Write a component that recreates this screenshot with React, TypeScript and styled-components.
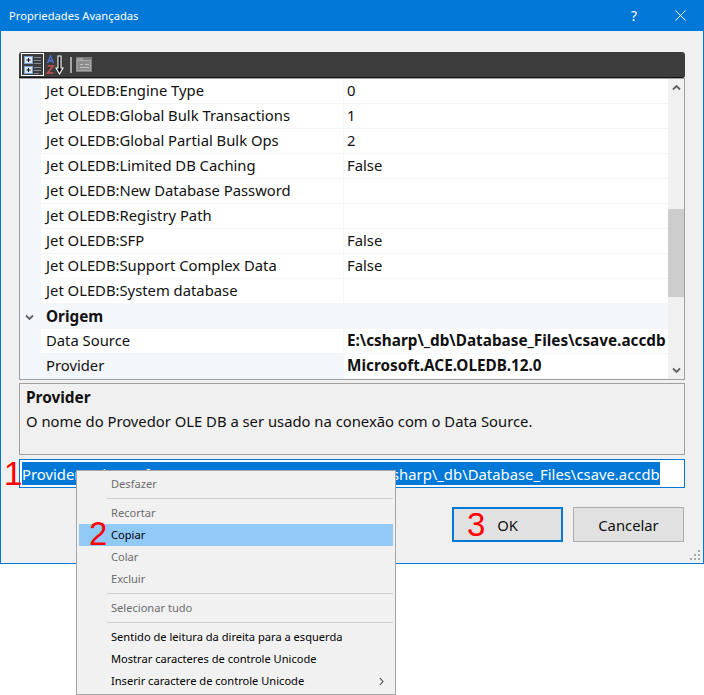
import React from "react";
import styled, { createGlobalStyle } from "styled-components";

const FONT = `"Noto Sans", "Open Sans", "Liberation Sans", sans-serif`;

const GlobalStyle = createGlobalStyle`
  html, body {
    margin: 0;
    padding: 0;
    background: #ffffff;
  }
  body {
    width: 704px;
    height: 695px;
    overflow: hidden;
    position: relative;
    font-family: ${FONT};
  }
`;

const Window = styled.div`
  width: 704px;
  height: 564px;
  box-sizing: border-box;
  border: 1px solid #0078d7;
  border-top: 0;
  background: #f0f0f0;
  display: flex;
  flex-direction: column;
  position: relative;
`;

const TitleBar = styled.div`
  height: 31px;
  flex: none;
  background: #0078d7;
  color: #ffffff;
  display: flex;
  align-items: center;
  padding-left: 8px;
  font-size: 11.2px;
`;

const TitleText = styled.span`
  flex: 1;
`;

const TitleButton = styled.div`
  width: 46px;
  height: 31px;
  display: flex;
  align-items: center;
  justify-content: center;
  font-size: 14px;
`;

const Content = styled.div`
  padding: 21px 18px 0 18px;
  display: flex;
  flex-direction: column;
`;

const Toolbar = styled.div`
  height: 25px;
  background: #3c3c3c;
  border-bottom: 1px solid #111111;
  border-radius: 3px 3px 3px 0;
  display: flex;
  align-items: center;
  padding-left: 2px;
`;

const ToolToggle = styled.div`
  width: 23px;
  height: 23px;
  box-sizing: border-box;
  border: 1px solid #ffffff;
  display: flex;
  align-items: center;
  justify-content: center;
  margin-right: 2px;
`;

const ToolDivider = styled.div`
  width: 2px;
  height: 16px;
  background: #a8a8a8;
  margin: 0 4px 0 4px;
`;

const Grid = styled.div`
  height: 302px;
  box-sizing: border-box;
  border: 1px solid #a0a0a0;
  display: flex;
  background: #f3f6fb;
`;

const GridRows = styled.div`
  flex: 1;
  overflow: hidden;
`;

const Row = styled.div`
  height: 25px;
  display: flex;
  font-size: 14.8px;
  color: #111111;
`;

const LabelCell = styled.div<{ $selected?: boolean }>`
  width: 303px;
  margin-left: 21px;
  padding-left: 5px;
  box-sizing: border-box;
  line-height: 23px;
  height: 25px;
  background: ${(p) => (p.$selected ? "#f3f6fb" : "#ffffff")};
  border-bottom: 1px solid #f3f6fb;
  border-right: 1px solid #f3f6fb;
  white-space: nowrap;
  overflow: hidden;
`;

const ValueCell = styled.div<{ $bold?: boolean }>`
  flex: 1;
  padding-left: 3px;
  line-height: 23px;
  height: 25px;
  box-sizing: border-box;
  background: #ffffff;
  border-bottom: 1px solid #f3f6fb;
  font-weight: ${(p) => (p.$bold ? 700 : 400)};
  font-size: ${(p) => (p.$bold ? "15.3px" : "14.8px")};
  white-space: nowrap;
  overflow: hidden;
`;

const CategoryRow = styled.div`
  height: 25px;
  display: flex;
  align-items: center;
  font-size: 15.3px;
  font-weight: 700;
  color: #111111;
  line-height: 21px;
  padding-bottom: 1px;
  box-sizing: border-box;
`;

const Chevron = styled.div`
  width: 26px;
  display: flex;
  justify-content: center;
  padding-right: 7px;
  padding-top: 3px;
  box-sizing: border-box;
`;

const ScrollBar = styled.div`
  width: 16px;
  flex: none;
  background: #f0f0f0;
  display: flex;
  flex-direction: column;
  align-items: stretch;
`;

const ScrollArrow = styled.div`
  height: 17px;
  flex: none;
  display: flex;
  align-items: center;
  justify-content: center;
`;

const ScrollTrack = styled.div`
  flex: 1;
  padding-top: 113px;
  padding-bottom: 65px;
  display: flex;
`;

const ScrollThumb = styled.div`
  flex: 1;
  background: #cdcdcd;
`;

const Description = styled.div`
  margin-top: 3px;
  height: 72px;
  box-sizing: border-box;
  border: 1px solid #a0a0a0;
  padding: 0 6px;
  color: #111111;
`;

const DescTitle = styled.div`
  font-size: 15.4px;
  font-weight: 700;
  line-height: 27px;
`;

const DescText = styled.div`
  font-size: 14.8px;
  line-height: 20px;
`;

const ConnectionBox = styled.div`
  margin-top: 4px;
  height: 29px;
  box-sizing: border-box;
  border: 1px solid #0078d7;
  background: #ffffff;
  padding: 2px;
  display: flex;
`;

const SelectedText = styled.div`
  background: #0078d7;
  color: #ffffff;
  font-size: 14.85px;
  line-height: 24px;
  height: 23px;
  width: 638px;
  white-space: nowrap;
  overflow: hidden;
`;

const ButtonRow = styled.div`
  margin-top: 19px;
  display: flex;
  justify-content: flex-end;
  gap: 10px;
  padding-right: 1px;
`;

const DialogButton = styled.div<{ $primary?: boolean }>`
  width: 111px;
  height: 35px;
  box-sizing: border-box;
  background: #e1e1e1;
  border: ${(p) => (p.$primary ? "2px solid #0078d7" : "1px solid #adadad")};
  display: flex;
  align-items: center;
  justify-content: center;
  font-size: 14.8px;
  color: #111111;
`;

const Grip = styled.div`
  position: absolute;
  right: 2px;
  bottom: 2px;
  line-height: 0;
`;

const Menu = styled.div`
  position: absolute;
  left: 76px;
  top: 470px;
  width: 320px;
  height: 225px;
  box-sizing: border-box;
  background: #f1f1f1;
  border: 1px solid #a6a6a6;
  padding: 2px;
`;

const MenuItem = styled.div<{ $disabled?: boolean; $active?: boolean }>`
  height: 22px;
  padding: 0 0 2px 32px;
  box-sizing: border-box;
  display: flex;
  align-items: center;
  justify-content: space-between;
  font-size: 11.1px;
  color: ${(p) => (p.$disabled ? "#6d6d6d" : "#000000")};
  background: ${(p) => (p.$active ? "#91c9f7" : "transparent")};
`;

const MenuSeparator = styled.div`
  height: 1px;
  margin: 3px 0 3px 28px;
  background: #cfcfcf;
`;

const SubArrow = styled.div`
  margin-right: 9px;
  display: flex;
  padding-top: 2px;
`;

const Marker = styled.div<{ $left: number; $top: number }>`
  position: absolute;
  left: ${(p) => p.$left}px;
  top: ${(p) => p.$top}px;
  font-family: "Liberation Sans", sans-serif;
  font-size: 33px;
  line-height: 33px;
  color: #ff0000;
`;

const rows: { label: string; value: string }[] = [
  { label: "Jet OLEDB:Engine Type", value: "0" },
  { label: "Jet OLEDB:Global Bulk Transactions", value: "1" },
  { label: "Jet OLEDB:Global Partial Bulk Ops", value: "2" },
  { label: "Jet OLEDB:Limited DB Caching", value: "False" },
  { label: "Jet OLEDB:New Database Password", value: "" },
  { label: "Jet OLEDB:Registry Path", value: "" },
  { label: "Jet OLEDB:SFP", value: "False" },
  { label: "Jet OLEDB:Support Complex Data", value: "False" },
  { label: "Jet OLEDB:System database", value: "" },
];

const CategorizedIcon = () => (
  <svg width="21" height="21" viewBox="0 0 21 21">
    <rect x="2.5" y="2.5" width="8" height="7" fill="#dbe6f4" stroke="#7fa3cf" />
    <rect x="2.5" y="12.5" width="8" height="7" fill="#dbe6f4" stroke="#7fa3cf" />
    <path d="M4.5 6h4M6.5 4v4M4.5 16h4M6.5 14v4" stroke="#111" />
    <path d="M12 3.5h7M12 6.5h7M12 9.5h7M12 13.5h7M12 16.5h7M12 19.5h5" stroke="#7f8c99" />
  </svg>
);

const AlphaIcon = () => (
  <svg width="20" height="21" viewBox="0 0 20 21">
    <path d="M1.5 9 4.5 2l3 7M2.5 7h4" fill="none" stroke="#4d74d6" strokeWidth="1.3" />
    <path d="M1.5 12h6l-6 7h6" fill="none" stroke="#c44f4f" strokeWidth="1.5" />
    <path d="M12 2v12h-2l3.5 6 3.5-6h-2V2z" fill="#111" stroke="#fff" strokeWidth="1.1" />
  </svg>
);

const PagesIcon = () => (
  <svg width="16" height="15" viewBox="0 0 16 15">
    <rect x="0" y="0" width="16" height="15" fill="#7c7c7c" />
    <rect x="1" y="3.5" width="13.5" height="10" fill="#8c8c8c" stroke="#a8a8a8" />
    <path d="M1 2h6M4 7.5h3M9 7.5h4M4 10.5h9" stroke="#c0c0c0" />
  </svg>
);

const ChevronIcon = ({ up, color = "#606060" }: { up?: boolean; color?: string }) => (
  <svg width="9" height="7" viewBox="0 0 9 7">
    <path d={up ? "M1 5.5 4.5 2 8 5.5" : "M1 1.5 4.5 5 8 1.5"} fill="none" stroke={color} strokeWidth="1.8" />
  </svg>
);

const GripIcon = () => (
  <svg width="11" height="11" viewBox="0 0 11 11" fill="#a8a8a8">
    <rect x="8" y="0" width="2" height="2" />
    <rect x="4" y="4" width="2" height="2" />
    <rect x="8" y="4" width="2" height="2" />
    <rect x="0" y="8" width="2" height="2" />
    <rect x="4" y="8" width="2" height="2" />
    <rect x="8" y="8" width="2" height="2" />
  </svg>
);

export default function App() {
  return (
    <>
      <GlobalStyle />
      <Window>
        <TitleBar>
          <TitleText>Propriedades Avançadas</TitleText>
          <TitleButton>?</TitleButton>
          <TitleButton>
            <svg width="11" height="11" viewBox="0 0 11 11">
              <path d="M.5.5l10 10M10.5.5l-10 10" stroke="#fff" strokeWidth="1" />
            </svg>
          </TitleButton>
        </TitleBar>
        <Content>
          <Toolbar>
            <ToolToggle>
              <CategorizedIcon />
            </ToolToggle>
            <AlphaIcon />
            <ToolDivider />
            <PagesIcon />
          </Toolbar>
          <Grid>
            <GridRows>
              {rows.map((r) => (
                <Row key={r.label}>
                  <LabelCell>{r.label}</LabelCell>
                  <ValueCell>{r.value}</ValueCell>
                </Row>
              ))}
              <CategoryRow>
                <Chevron>
                  <ChevronIcon />
                </Chevron>
                Origem
              </CategoryRow>
              <Row>
                <LabelCell>Data Source</LabelCell>
                <ValueCell $bold>E:\csharp\_db\Database_Files\csave.accdb</ValueCell>
              </Row>
              <Row>
                <LabelCell $selected>Provider</LabelCell>
                <ValueCell $bold>Microsoft.ACE.OLEDB.12.0</ValueCell>
              </Row>
            </GridRows>
            <ScrollBar>
              <ScrollArrow>
                <ChevronIcon up />
              </ScrollArrow>
              <ScrollTrack>
                <ScrollThumb />
              </ScrollTrack>
              <ScrollArrow>
                <ChevronIcon />
              </ScrollArrow>
            </ScrollBar>
          </Grid>
          <Description>
            <DescTitle>Provider</DescTitle>
            <DescText>O nome do Provedor OLE DB a ser usado na conexão com o Data Source.</DescText>
          </Description>
          <ConnectionBox>
            <SelectedText>Provider=Microsoft.ACE.OLEDB.12.0;Data Source=E:\csharp\_db\Database_Files\csave.accdb</SelectedText>
          </ConnectionBox>
          <ButtonRow>
            <DialogButton $primary>OK</DialogButton>
            <DialogButton>Cancelar</DialogButton>
          </ButtonRow>
        </Content>
        <Grip>
          <GripIcon />
        </Grip>
      </Window>
      <Menu>
        <MenuItem $disabled>Desfazer</MenuItem>
        <MenuSeparator />
        <MenuItem $disabled>Recortar</MenuItem>
        <MenuItem $active>Copiar</MenuItem>
        <MenuItem $disabled>Colar</MenuItem>
        <MenuItem $disabled>Excluir</MenuItem>
        <MenuSeparator />
        <MenuItem $disabled>Selecionar tudo</MenuItem>
        <MenuSeparator />
        <MenuItem>Sentido de leitura da direita para a esquerda</MenuItem>
        <MenuItem>Mostrar caracteres de controle Unicode</MenuItem>
        <MenuItem>
          Inserir caractere de controle Unicode
          <SubArrow>
            <svg width="5" height="9" viewBox="0 0 5 9">
              <path d="M.8 1 4 4.5.8 8" fill="none" stroke="#444" strokeWidth="1.1" />
            </svg>
          </SubArrow>
        </MenuItem>
      </Menu>
      <Marker $left={4} $top={457}>1</Marker>
      <Marker $left={89} $top={517}>2</Marker>
      <Marker $left={467} $top={508}>3</Marker>
    </>
  );
}
